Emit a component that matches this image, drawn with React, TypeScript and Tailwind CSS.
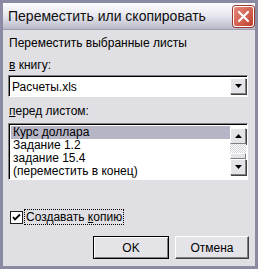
import React from 'react';

const font = { fontFamily: '"Liberation Sans", Arial, sans-serif' };

const ArrowDown = () => (
  <svg width="7" height="4" viewBox="0 0 7 4"><path d="M0 0h7L3.5 4z" fill="#000" /></svg>
);
const ArrowUp = () => (
  <svg width="7" height="4" viewBox="0 0 7 4"><path d="M0 4h7L3.5 0z" fill="#000" /></svg>
);

const ScrollBtn: React.FC<{ children: React.ReactNode }> = ({ children }) => (
  <div className="w-[16px] h-[16px] flex items-center justify-center bg-[#e4e3e8] border border-t-white border-l-white border-r-[#808080] border-b-[#808080] shadow-[1px_1px_0_#404040]">
    {children}
  </div>
);

const sheets = ['Курс доллара', 'Задание 1.2', 'задание 15.4', '(переместить в конец)'];

export default function App() {
  return (
    <div className="w-[258px] h-[269px] bg-[#e0dfe3] border-[3px] border-[#8a8aa3] flex flex-col text-[12px] text-black overflow-hidden" style={font}>
      {/* title bar */}
      <div className="h-[27px] shrink-0 flex items-center justify-between pl-[5px] pr-[1px] bg-gradient-to-b from-[#fdfdfe] via-[#e6e6ee] to-[#b9b9c9] border-b border-[#9d9db2]">
        <span className="text-[14px] text-[#101010]">Переместить или скопировать</span>
        <div className="w-[21px] h-[21px] rounded-[3px] bg-gradient-to-br from-[#e6877a] to-[#c13e2c] border border-white flex items-center justify-center shadow-[0_0_0_1px_#9b3a30]">
          <svg width="11" height="11" viewBox="0 0 11 11">
            <path d="M1 1l9 9M10 1l-9 9" stroke="#fff" strokeWidth="2.2" strokeLinecap="square" />
          </svg>
        </div>
      </div>

      {/* body */}
      <div className="flex flex-col px-[5px] pt-[6px]">
        <div className="h-[14px] leading-[14px] pl-[1px]">Переместить выбранные листы</div>
        <div className="h-[14px] leading-[14px] pl-[1px] mt-[8px]"><u>в</u> книгу:</div>
        <div className="mt-[3px] h-[22px] w-[240px] bg-white border border-t-[#808080] border-l-[#808080] border-b-white border-r-white flex">
          <div className="flex-1 flex items-center border-t border-l border-black pl-[2px]">Расчеты.xls</div>
          <div className="border-t border-black py-[1px] pr-[1px] flex">
            <ScrollBtn><ArrowDown /></ScrollBtn>
          </div>
        </div>
        <div className="h-[14px] leading-[14px] pl-[1px] mt-[7px]"><u>п</u>еред листом:</div>
        <div className="mt-[5px] h-[57px] w-[240px] bg-white border border-t-[#808080] border-l-[#808080] border-b-white border-r-white flex">
          <div className="flex-1 flex flex-col border-t border-l border-black pt-[1px] pl-[1px]">
            {sheets.map((s, i) => (
              <div key={s} className={`h-[13px] leading-[13px] pl-[2px] ${i === 0 ? 'bg-[#b5b5c6]' : ''}`}>{s}</div>
            ))}
          </div>
          <div className="border-t border-black py-[3px] pr-[1px] flex flex-col">
            <ScrollBtn><ArrowUp /></ScrollBtn>
            <div className="h-[9px] w-[16px] bg-[repeating-conic-gradient(#ffffff_0_25%,#d4d3da_0_50%)] bg-[length:2px_2px]" />
            <div className="h-[6px] w-[16px] bg-[#e4e3e8] border border-t-white border-l-white border-r-[#808080] border-b-[#808080]" />
            <ScrollBtn><ArrowDown /></ScrollBtn>
          </div>
        </div>

        <div className="mt-[29px] flex items-center pl-[2px] h-[16px]">
          <div className="w-[13px] h-[13px] bg-white border border-[#1c1c1c] flex items-center justify-center">
            <svg width="9" height="9" viewBox="0 0 9 9">
              <path d="M1 4l2 2.5L8 1.5" stroke="#000" strokeWidth="1.8" fill="none" />
            </svg>
          </div>
          <span className="ml-[1px] px-[1px] border border-dotted border-black leading-[14px]">Создавать <u>к</u>опию</span>
        </div>

        <div className="mt-[11px] flex justify-end gap-[6px] pr-[1px]">
          <button className="w-[76px] h-[23px] bg-[#e4e3e8] border border-black shadow-[inset_1px_1px_0_#fff,inset_-1px_-1px_0_#808080]">OK</button>
          <button className="w-[74px] h-[23px] bg-[#e4e3e8] border border-t-white border-l-white border-r-[#404040] border-b-[#404040] shadow-[inset_-1px_-1px_0_#808080]">Отмена</button>
        </div>
      </div>
    </div>
  );
}
